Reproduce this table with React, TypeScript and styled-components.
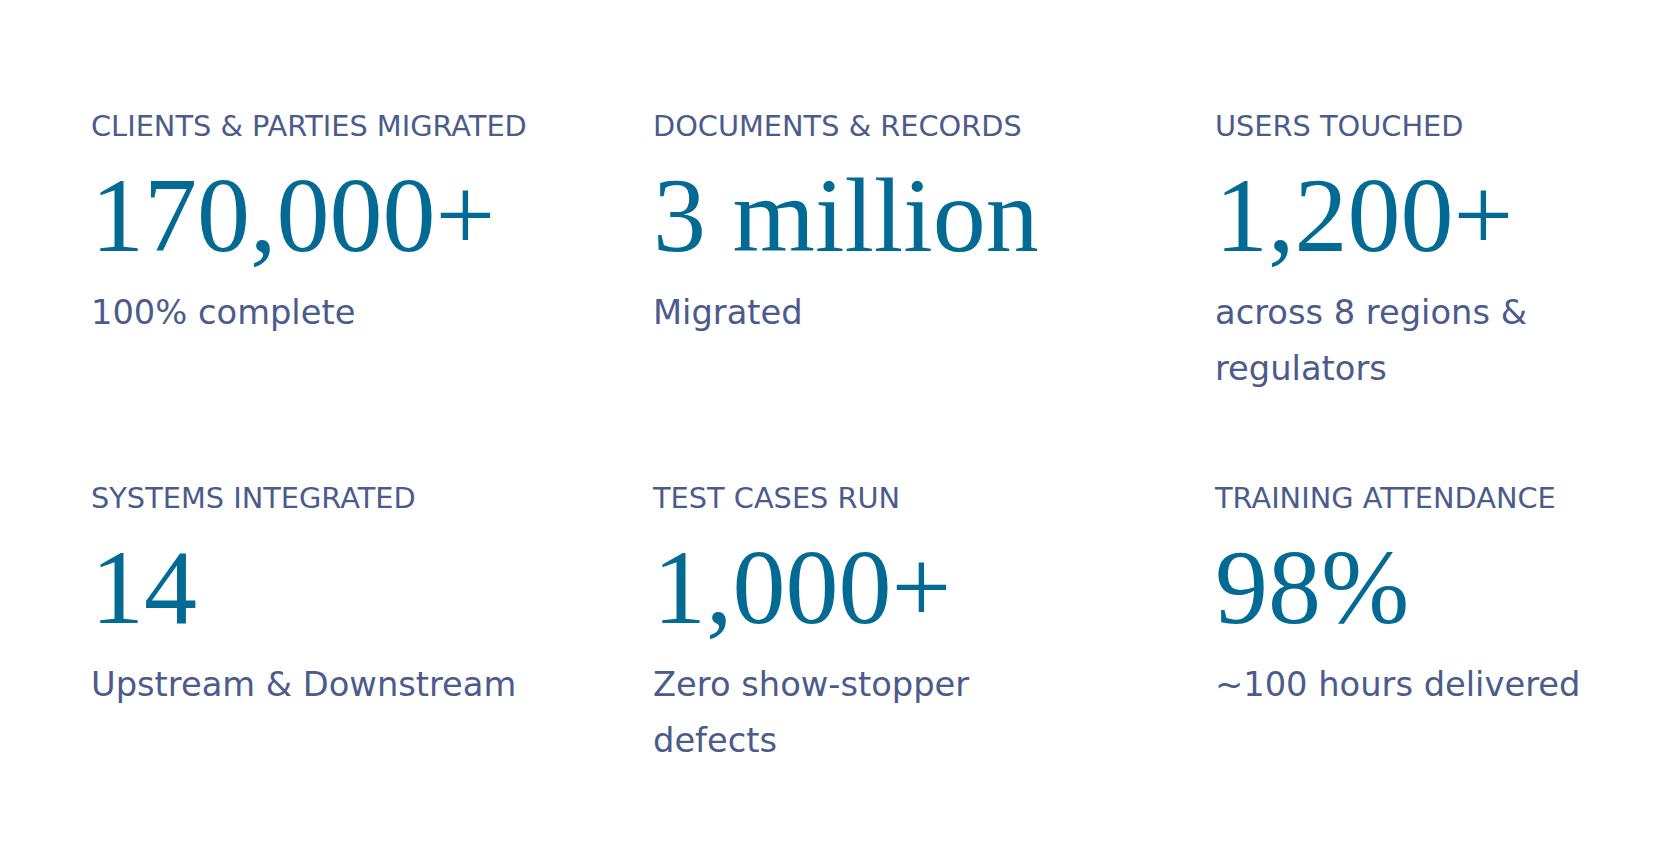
import React from "react";
import styled, { createGlobalStyle } from "styled-components";

const GlobalStyle = createGlobalStyle`
  html, body {
    margin: 0;
    padding: 0;
    background: #ffffff;
  }
  body {
    font-family: "DejaVu Sans", "Liberation Sans", sans-serif;
    overflow: hidden;
  }
`;

const Page = styled.main`
  width: 1668px;
  min-height: 851px;
  box-sizing: border-box;
  padding: 108px 0 0 91px;
  background: #ffffff;
`;

const StatsGrid = styled.section`
  display: grid;
  grid-template-columns: repeat(3, 445px);
  column-gap: 117px;
  row-gap: 83px;
  align-items: start;
`;

const StatCard = styled.article`
  display: flex;
  flex-direction: column;
  align-items: flex-start;
`;

const Label = styled.h3`
  margin: 0 0 19px;
  font-family: "DejaVu Sans", "Liberation Sans", sans-serif;
  font-weight: 400;
  font-size: 28.8px;
  line-height: 36px;
  color: #4b5b8c;
  text-transform: uppercase;
  white-space: nowrap;
`;

const Value = styled.div`
  margin: 0 0 17px;
  font-family: "Liberation Serif", "DejaVu Serif", serif;
  font-weight: 400;
  font-size: 106px;
  line-height: 105px;
  color: #036a94;
  white-space: nowrap;
`;

const Caption = styled.p`
  margin: 0;
  font-family: "DejaVu Sans", "Liberation Sans", sans-serif;
  font-weight: 400;
  font-size: 33.7px;
  line-height: 56px;
  color: #4b5b8c;
`;

type Stat = { label: string; value: string; caption: string };

const stats: Stat[] = [
  { label: "Clients & Parties Migrated", value: "170,000+", caption: "100% complete" },
  { label: "Documents & Records", value: "3 million", caption: "Migrated" },
  { label: "Users Touched", value: "1,200+", caption: "across 8 regions & regulators" },
  { label: "Systems Integrated", value: "14", caption: "Upstream & Downstream" },
  { label: "Test Cases Run", value: "1,000+", caption: "Zero show-stopper defects" },
  { label: "Training Attendance", value: "98%", caption: "~100 hours delivered" },
];

export default function App() {
  return (
    <>
      <GlobalStyle />
      <Page>
        <StatsGrid>
          {stats.map((s) => (
            <StatCard key={s.label}>
              <Label>{s.label}</Label>
              <Value>{s.value}</Value>
              <Caption>{s.caption}</Caption>
            </StatCard>
          ))}
        </StatsGrid>
      </Page>
    </>
  );
}
